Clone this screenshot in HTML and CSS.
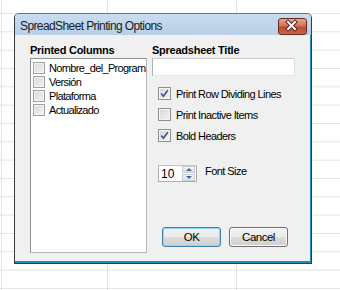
FILE: index.html
```html
<!DOCTYPE html>
<html lang="en">
<head>
    <meta charset="UTF-8">
    <title>SpreadSheet Printing Options</title>
    <link rel="stylesheet" href="styles.css">
</head>
<body>
    <div class="window">
        <div class="titlebar">
            <span class="title">SpreadSheet Printing Options</span>
            <span class="close-btn">
                <svg width="27" height="15" viewBox="0 0 27 15">
                    <path d="M10 4 L17 11 M17 4 L10 11" stroke="#5b2418" stroke-width="4" stroke-linecap="square"/>
                    <path d="M10 4 L17 11 M17 4 L10 11" stroke="#ffffff" stroke-width="2" stroke-linecap="square"/>
                </svg>
            </span>
        </div>

        <div class="dialog-body">
            <div class="col-left">
                <div class="heading">Printed Columns</div>
                <div class="listbox">
                    <div class="list-item"><span class="box small"></span>Nombre_del_Programa</div>
                    <div class="list-item"><span class="box small"></span>Versión</div>
                    <div class="list-item"><span class="box small"></span>Plataforma</div>
                    <div class="list-item"><span class="box small"></span>Actualizado</div>
                </div>
            </div>

            <div class="col-right">
                <div class="heading">Spreadsheet Title</div>
                <div class="text-input"></div>

                <div class="options">
                    <div class="option">
                        <span class="box">
                            <svg width="9" height="9" viewBox="0 0 9 9"><path d="M1.2 4.6 L3.4 7.2 L7.8 1.2" fill="none" stroke="#3a4f9c" stroke-width="1.6"/></svg>
                        </span>
                        Print Row Dividing Lines
                    </div>
                    <div class="option">
                        <span class="box"></span>
                        Print Inactive Items
                    </div>
                    <div class="option">
                        <span class="box">
                            <svg width="9" height="9" viewBox="0 0 9 9"><path d="M1.2 4.6 L3.4 7.2 L7.8 1.2" fill="none" stroke="#3a4f9c" stroke-width="1.6"/></svg>
                        </span>
                        Bold Headers
                    </div>
                </div>

                <div class="font-row">
                    <div class="spinner">
                        <span class="spin-value">10</span>
                        <span class="spin-buttons">
                            <span class="spin-btn"><span class="arrow-up"></span></span>
                            <span class="spin-btn"><span class="arrow-down"></span></span>
                        </span>
                    </div>
                    <span class="font-label">Font Size</span>
                </div>

                <div class="buttons">
                    <button class="btn btn-default">OK</button>
                    <button class="btn">Cancel</button>
                </div>
            </div>
        </div>
    </div>
</body>
</html>
```

FILE: styles.css
```css
body {
    margin: 0;
    width: 340px;
    height: 290px;
    overflow: hidden;
    font-family: "Liberation Sans", Arial, sans-serif;
    font-size: 11px;
    color: #000;
    background-color: #fff;
    background-image:
        linear-gradient(#e3e3e3, #e3e3e3),
        linear-gradient(#e3e3e3, #e3e3e3),
        linear-gradient(#e3e3e3, #e3e3e3),
        linear-gradient(#e3e3e3 1px, transparent 1px);
    background-size: 1px 100%, 1px 100%, 1px 100%, 100% 18.333px;
    background-position: 1px 0, 107px 0, 236px 0, 0 13px;
    background-repeat: no-repeat, no-repeat, no-repeat, repeat;
    padding-top: 13px;
    padding-left: 14px;
    box-sizing: border-box;
}

.window {
    width: 298px;
    height: 251px;
    box-sizing: border-box;
    border: 1px solid #3a3a3a;
    border-top-color: #707070;
    border-radius: 5px 5px 0 0;
    background: #f0f0f0;
    display: flex;
    flex-direction: column;
}

.titlebar {
    height: 21px;
    display: flex;
    align-items: center;
    justify-content: space-between;
    padding: 0 4px 0 5px;
    border-radius: 4px 4px 0 0;
    background: linear-gradient(#c9dcf0, #b8cfe8);
}

.title {
    font-size: 12px;
    letter-spacing: -0.6px;
    color: #1a1a1a;
    margin-top: 2px;
}

.close-btn {
    display: block;
    width: 27px;
    height: 15px;
    margin-top: 4px;
    border: 1px solid #6b2a1e;
    border-radius: 3px;
    background: linear-gradient(#e4a894 0%, #d0735b 45%, #bf4b31 55%, #c9664a 100%);
}

.close-btn svg {
    display: block;
    margin: -1px 0 0 -1px;
}

.dialog-body {
    flex: 1;
    display: flex;
    gap: 5px;
    padding: 9px 15px 8px 15px;
    border-right: 1px solid #1f8db3;
    border-bottom: 2px solid #1f8db3;
}

.heading {
    font-weight: bold;
    line-height: 13px;
    letter-spacing: -0.25px;
    margin-bottom: 1px;
}

.col-left {
    width: 117px;
    display: flex;
    flex-direction: column;
}

.listbox {
    flex: 1;
    background: #fff;
    border: 1px solid #8d9199;
    border-right-color: #b5b9bf;
    border-bottom-color: #b5b9bf;
    padding: 2px 0 0 2px;
    overflow: hidden;
}

.list-item {
    display: flex;
    align-items: center;
    height: 14px;
    white-space: nowrap;
    letter-spacing: -0.65px;
}

.box {
    flex: none;
    box-sizing: border-box;
    width: 13px;
    height: 13px;
    border: 1px solid #8f8f8f;
    background: linear-gradient(135deg, #d6d6d6, #f4f4f4);
    box-shadow: inset 0 0 0 1px #f4f4f4;
    display: flex;
    align-items: center;
    justify-content: center;
    margin-right: 5px;
}

.box.small {
    width: 12px;
    height: 12px;
    border-color: #a0a0a0;
    background: linear-gradient(135deg, #d9d9d9, #f2f2f2);
    margin-right: 4px;
}

.col-right {
    width: 143px;
    display: flex;
    flex-direction: column;
}

.text-input {
    height: 18px;
    box-sizing: border-box;
    background: #fff;
    border: 1px solid #abadb3;
    border-top-color: #c8cacf;
    border-bottom-color: #e3e9ef;
    border-right-color: #dbdfe6;
}

.options {
    display: flex;
    flex-direction: column;
    gap: 8px;
    margin: 11px 0 0 6px;
}

.option {
    display: flex;
    align-items: center;
    height: 13px;
    letter-spacing: -0.6px;
    white-space: nowrap;
}

.font-row {
    display: flex;
    align-items: flex-start;
    gap: 8px;
    margin: 23px 0 0 6px;
}

.spinner {
    width: 39px;
    height: 17px;
    box-sizing: border-box;
    display: flex;
    background: #fff;
    border: 1px solid #abadb3;
    border-top-color: #c2c4c9;
}

.spin-value {
    flex: 1;
    padding: 1px 0 0 2px;
    font-size: 12px;
    line-height: 14px;
}

.spin-buttons {
    width: 13px;
    display: flex;
    flex-direction: column;
    gap: 1px;
    padding: 0 1px 0 0;
}

.spin-btn {
    flex: 1;
    display: flex;
    align-items: center;
    justify-content: center;
    border: 1px solid #c9ced6;
    background: linear-gradient(#f3f5f8, #dde3ea);
}

.arrow-up {
    width: 0;
    height: 0;
    border-left: 3px solid transparent;
    border-right: 3px solid transparent;
    border-bottom: 3px solid #4d6590;
}

.arrow-down {
    width: 0;
    height: 0;
    border-left: 3px solid transparent;
    border-right: 3px solid transparent;
    border-top: 3px solid #4d6590;
}

.font-label {
    letter-spacing: -0.55px;
    line-height: 13px;
}

.buttons {
    display: flex;
    gap: 8px;
    margin: auto 0 6px 10px;
}

.btn {
    width: 59px;
    height: 20px;
    padding: 0;
    font-family: "Liberation Sans", Arial, sans-serif;
    font-size: 11.5px;
    letter-spacing: -0.5px;
    color: #000;
    border: 1px solid #707070;
    border-radius: 3px;
    background: linear-gradient(#f2f2f2 0%, #ebebeb 50%, #dddddd 51%, #cfcfcf 100%);
    box-shadow: inset 0 0 0 1px #fcfcfc;
}

.btn-default {
    border-color: #3c7fb1;
    box-shadow: inset 0 0 0 1px #8fd6f2;
}
```
